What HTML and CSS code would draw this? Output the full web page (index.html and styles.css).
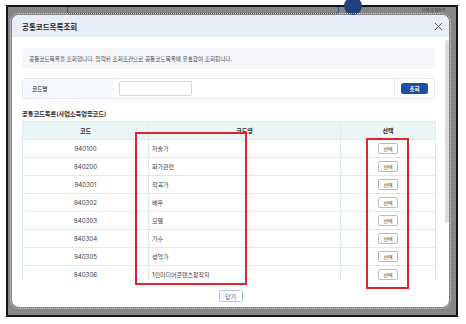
FILE: index.html
```html
<!DOCTYPE html>
<html lang="ko">
    <head>
        <meta charset="utf-8">
        <title>공통코드목록조회</title>
        <link rel="stylesheet" href="styles.css">
    </head>
    <body>
        <div class="frame">
            <!-- dimmed page behind the popup -->
            <div class="behind-search"></div>
            <div class="behind-circle"></div>
            <span class="behind-link">나의 문의하기</span>

            <div class="modal">
                <div class="modal-head">
                    <h2>공통코드목록조회</h2>
                    <button class="close" type="button">
                        <svg width="9" height="9" viewBox="0 0 9 9"><path d="M1 1L8 8M8 1L1 8" stroke="#444" stroke-width="0.9" fill="none"/></svg>
                    </button>
                </div>
                <div class="modal-body">
                    <p class="desc">공통코드목록을 조회합니다. 입력된 조회조건으로 공통코드목록에 유효값이 조회됩니다.</p>
                    <div class="search">
                        <div class="search-label">코드명</div>
                        <div class="search-field"><input type="text"></div>
                        <div class="search-btn"><button type="button">조회</button></div>
                    </div>
                    <h3 class="list-title">공통코드목록(사업소득업종코드)</h3>
                    <table class="grid">
                        <colgroup>
                            <col class="c-code">
                            <col class="c-name">
                            <col class="c-pick">
                        </colgroup>
                        <thead>
                            <tr><th>코드</th><th>코드명</th><th>선택</th></tr>
                        </thead>
                        <tbody>
                            <tr><td class="code">940100</td><td class="name">저술가</td><td class="pick"><button type="button">선택</button></td></tr>
                            <tr><td class="code">940200</td><td class="name">화가관련</td><td class="pick"><button type="button">선택</button></td></tr>
                            <tr><td class="code">940301</td><td class="name">작곡가</td><td class="pick"><button type="button">선택</button></td></tr>
                            <tr><td class="code">940302</td><td class="name">배우</td><td class="pick"><button type="button">선택</button></td></tr>
                            <tr><td class="code">940303</td><td class="name">모델</td><td class="pick"><button type="button">선택</button></td></tr>
                            <tr><td class="code">940304</td><td class="name">가수</td><td class="pick"><button type="button">선택</button></td></tr>
                            <tr><td class="code">940305</td><td class="name">성악가</td><td class="pick"><button type="button">선택</button></td></tr>
                            <tr><td class="code">940306</td><td class="name">1인미디어콘텐츠창작자</td><td class="pick"><button type="button">선택</button></td></tr>
                        </tbody>
                    </table>
                    <div class="scroll-thumb"></div>
                </div>
                <div class="modal-foot">
                    <button type="button">닫기</button>
                </div>
            </div>

            <!-- red annotation boxes -->
            <div class="mark mark-name"></div>
            <div class="mark mark-pick"></div>
        </div>
    </body>
</html>
```

FILE: styles.css
```css
html, body {
    margin: 0;
    padding: 0;
    background: #fff;
    font-family: "Inter", "Noto Sans CJK KR", sans-serif;
}
.frame {
    position: relative;
    box-sizing: border-box;
    width: 452px;
    height: 312px;
    margin: 5px 0 0 6px;
    padding: 8px 0 0 4px;
    border: 2px solid #161616;
    background: #878787;
}

/* page behind the dim layer */
.behind-search {
    position: absolute;
    left: 59px;
    top: 0;
    width: 270px;
    height: 6px;
    border: 1px solid #2e4f92;
    border-top: none;
    border-radius: 0 0 3px 3px;
}
.behind-circle {
    position: absolute;
    left: 336px;
    top: -10px;
    width: 18px;
    height: 18px;
    border-radius: 50%;
    background: #22407f;
}
.behind-link {
    position: absolute;
    left: 414px;
    top: 1px;
    font-size: 4px;
    line-height: 6px;
    color: #2b2b2b;
}

/* popup */
.modal {
    position: relative;
    width: 437px;
    height: 292px;
    display: flex;
    flex-direction: column;
    overflow: hidden;
    background: #fff;
    border-radius: 7px;
    outline: 1px dotted #d2d2d2;
    outline-offset: 1px;
}
.modal-head {
    flex: none;
    height: 22px;
    display: flex;
    align-items: center;
    justify-content: space-between;
    padding: 0 6px 0 10px;
    background: #e8eef8;
}
.modal-head h2 {
    margin: 0;
    font-size: 7.5px;
    font-weight: 700;
    color: #1e1e1e;
}
.close {
    display: flex;
    padding: 0;
    border: none;
    background: none;
}
.modal-body {
    position: relative;
    flex: 1;
    overflow: hidden;
    padding: 11px 14px 0 10px;
}
.desc {
    box-sizing: border-box;
    height: 21px;
    margin: 0;
    padding-left: 7px;
    display: flex;
    align-items: center;
    background: #f4f6fb;
    border-radius: 4px;
    font-size: 5.6px;
    color: #444;
}
.search {
    box-sizing: border-box;
    height: 21px;
    margin-top: 9px;
    display: flex;
    border: 1px solid #e1e7f1;
    border-radius: 4px;
    overflow: hidden;
}
.search-label {
    width: 81px;
    padding-left: 9px;
    display: flex;
    align-items: center;
    background: #f4f7fc;
    font-size: 5.6px;
    font-weight: 500;
    color: #222;
}
.search-field {
    flex: 1;
    display: flex;
    align-items: center;
    padding-left: 6px;
}
.search-field input {
    box-sizing: border-box;
    width: 73px;
    height: 15px;
    margin: 0;
    border: 1px solid #d0d4db;
    border-radius: 2px;
}
.search-btn {
    width: 39px;
    display: flex;
    align-items: center;
    justify-content: center;
    border-left: 1px solid #e6eaf1;
}
.search-btn button {
    width: 27px;
    height: 11px;
    padding: 0;
    border: none;
    border-radius: 2.5px;
    background: #1d4e9f;
    color: #fff;
    font-family: inherit;
    font-size: 5.5px;
    font-weight: 700;
}
.list-title {
    margin: 10px 0 3px;
    font-size: 6.2px;
    line-height: 9px;
    font-weight: 600;
    color: #2b2b2b;
}
.grid {
    width: 413px;
    border-collapse: collapse;
    table-layout: fixed;
    font-size: 6px;
    color: #3a3a3a;
}
.c-code { width: 126px; }
.c-name { width: 192px; }
.c-pick { width: 95px; }
.grid th,
.grid td {
    height: 17px;
    padding: 0;
    border: 1px solid #daeceb;
    text-align: center;
}
.grid th {
    background: #eaf6f5;
    font-weight: 600;
    color: #2b2b2b;
}
.grid td.code {
    font-size: 6.2px;
}
.grid td.name {
    text-align: left;
    padding-left: 3px;
}
.pick button {
    display: block;
    width: 20px;
    height: 11px;
    margin: 0 auto;
    padding: 0;
    border: 1px solid #bdbdbd;
    border-radius: 2px;
    background: #fff;
    color: #333;
    font-family: inherit;
    font-size: 5px;
}
.scroll-thumb {
    position: absolute;
    right: 0;
    top: 3px;
    width: 4px;
    height: 183px;
    border-radius: 2px;
    background: #dcdcdc;
}
.modal-foot {
    flex: none;
    box-sizing: border-box;
    height: 27px;
    padding-top: 10px;
    display: flex;
    justify-content: center;
}
.modal-foot button {
    width: 24px;
    height: 12px;
    padding: 0;
    border: 1px solid #a9c4ef;
    border-radius: 2.5px;
    background: #fff;
    color: #2a5cb8;
    font-family: inherit;
    font-size: 6px;
}

/* annotation */
.mark {
    position: absolute;
    box-sizing: border-box;
    border: 2px solid #e4232c;
}
.mark-name {
    left: 127px;
    top: 125px;
    width: 112px;
    height: 153px;
}
.mark-pick {
    left: 358px;
    top: 131px;
    width: 43px;
    height: 151px;
}
```
